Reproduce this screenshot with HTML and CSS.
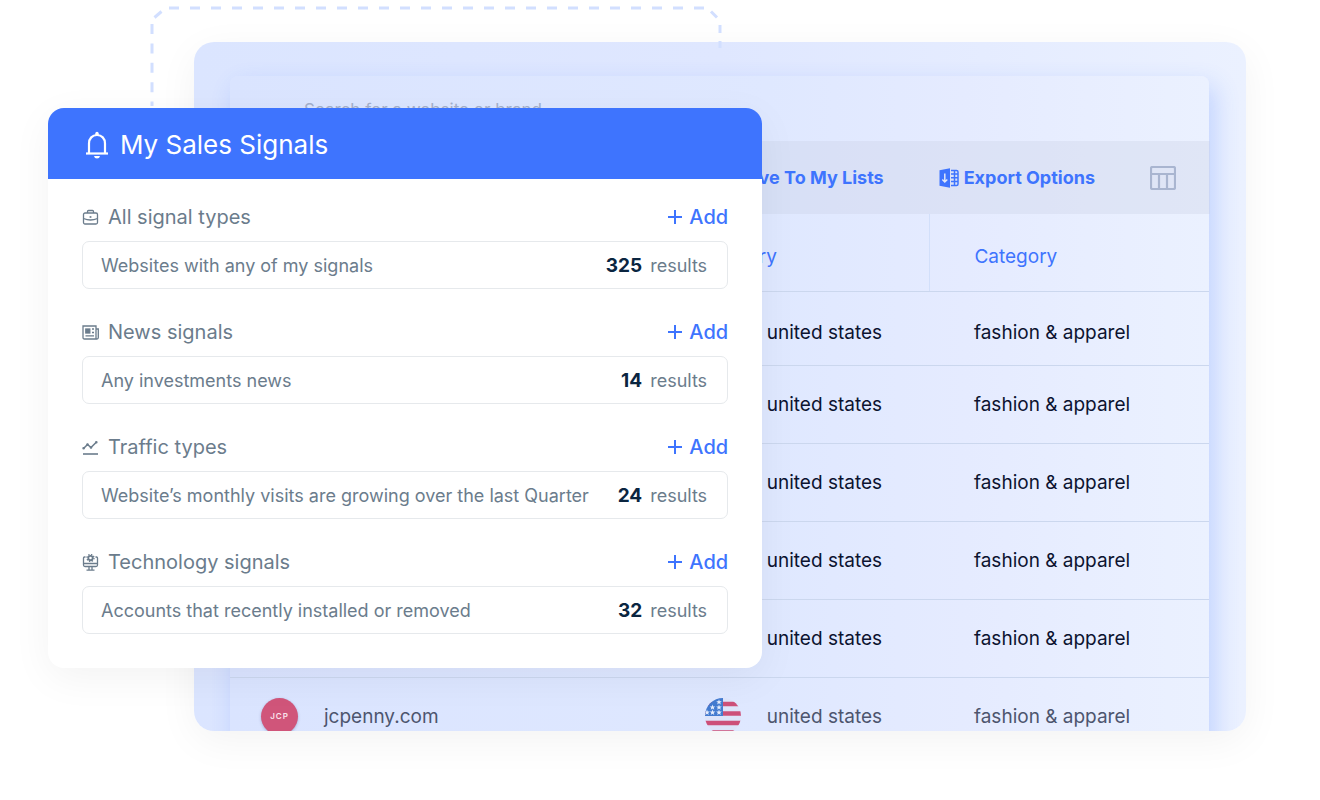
FILE: index.html
```html
<!DOCTYPE html>
<html lang="en">
<head>
  <meta charset="UTF-8" />
  <meta name="viewport" content="width=device-width, initial-scale=1.0" />
  <title>My Sales Signals</title>
  <link rel="stylesheet" href="styles.css">
</head>
<body>

<main class="scene">

  <svg class="connector" width="572" height="110" viewBox="0 0 572 110" aria-hidden="true">
    <path d="M2 24V106" stroke-dasharray="10 9.4" />
    <path d="M4.500 17.500L11.500 11.500" />
    <path d="M19 8H554" stroke-dasharray="10 11" />
    <path d="M561 11.500L567 17.500" />
    <path d="M570 25V33M570 41V48" />
  </svg>

  <section class="panel">
    <div class="sheet">
      <div class="search">
        <input type="text" class="search-input" placeholder="Search for a website or brand" aria-label="Search for a website or brand">
      </div>

      <div class="toolbar">
        <button type="button" class="tool">Save To My Lists</button>
        <button type="button" class="tool">
          <svg width="20" height="20" viewBox="0 0 20 20" aria-hidden="true">
            <path d="M0.500 2.200L11 0.300V19.700L0.500 17.800Z" fill="#3e74fe" />
            <path d="M5.800 5.500V13.500M3.300 11.500L5.800 14L8.300 11.500" fill="none" stroke="#e0e6f8" stroke-width="1.500" />
            <path d="M12 2.500H17.500Q19 2.500 19 4V16Q19 17.500 17.500 17.500H12M12 6H19M12 9.800H19M12 13.600H19M15.500 2.500V17.500" fill="none" stroke="#3e74fe" stroke-width="1.500" />
          </svg>
          Export Options
        </button>
        <button type="button" class="tool" aria-label="Columns">
          <svg width="26" height="24" viewBox="0 0 26 24" fill="none" stroke="#a9b5d0" stroke-width="2.200" aria-hidden="true">
            <rect x="1" y="1" width="24" height="22" rx="1.500" />
            <path d="M1 8H25M9 8V23M17 8V23" />
          </svg>
        </button>
      </div>

      <table class="results-table">
        <thead>
          <tr>
            <th class="col-domain"></th>
            <th class="col-country">Country</th>
            <th class="col-category">Category</th>
          </tr>
        </thead>
        <tbody>
          <tr><td></td><td><span class="country">united states</span></td><td>fashion &amp; apparel</td></tr>
          <tr><td></td><td><span class="country">united states</span></td><td>fashion &amp; apparel</td></tr>
          <tr><td></td><td><span class="country">united states</span></td><td>fashion &amp; apparel</td></tr>
          <tr><td></td><td><span class="country">united states</span></td><td>fashion &amp; apparel</td></tr>
          <tr><td></td><td><span class="country">united states</span></td><td>fashion &amp; apparel</td></tr>
          <tr class="faded">
            <td>
              <div class="domain"><span class="logo">JCP</span>jcpenny.com</div>
            </td>
            <td>
              <div class="flag-cell">
                <svg width="36" height="36" viewBox="0 0 36 36" aria-hidden="true">
                  <clipPath id="round"><circle cx="18" cy="18" r="18" /></clipPath>
                  <g clip-path="url(#round)">
                    <rect width="36" height="36" fill="#dde4fa" />
                    <path d="M0 6H36M0 15.500H36M0 25H36M0 34.500H36" stroke="#cd5079" stroke-width="4.700" />
                    <rect width="18" height="18" fill="#437bd0" />
                    <g fill="#e6edfc">
                      <path id="star" d="M14 1.200L14.700 3.200H16.800L15.200 4.500L15.800 6.500L14 5.300L12.200 6.500L12.800 4.500L11.200 3.200H13.300Z" />
                      <use href="#star" y="5.300" />
                      <use href="#star" y="10.400" />
                      <use href="#star" x="-6.500" y="5.300" />
                      <use href="#star" x="-6.500" y="10.400" />
                      <use href="#star" x="-12" y="10.400" />
                    </g>
                  </g>
                </svg>
                united states
              </div>
            </td>
            <td>fashion &amp; apparel</td>
          </tr>
        </tbody>
      </table>
    </div>
  </section>

  <section class="signals">
    <header class="signals-header">
      <svg width="24" height="28" viewBox="0 0 24 28" fill="none" stroke="#fff" stroke-width="2.200" aria-hidden="true">
        <path d="M1 22.500H23" />
        <path d="M4 22V12.500C4 7.500 7.300 4 12 4S20 7.500 20 12.500V22" />
        <path d="M10.300 4V2.500Q10.300 0.800 12 0.800T13.700 2.500V4Z" fill="#fff" stroke="none" />
        <path d="M9 25H15Q14.500 27.500 12 27.500T9 25Z" fill="#fff" stroke="none" />
      </svg>
      <h1 class="signals-title">My Sales Signals</h1>
    </header>

    <div class="signals-body">
      <div class="group">
        <div class="group-head">
          <svg class="icon" viewBox="0 0 17 17" aria-hidden="true">
            <rect x="1.500" y="4" width="14" height="11" rx="1.500" />
            <path d="M5.500 4V2.500Q5.500 1.500 6.500 1.500H10.500Q11.500 1.500 11.500 2.500V4M1.500 9.500Q8.500 12.500 15.500 9.500" />
            <circle cx="8.500" cy="8" r="0.400" />
          </svg>
          <h2 class="group-title">All signal types</h2>
          <button type="button" class="add"><svg class="plus" viewBox="0 0 14 14" aria-hidden="true"><path d="M7 0V14M0 7H14" /></svg>Add</button>
        </div>
        <a href="#" class="signal">Websites with any of my signals <span class="count"><b>325</b>results</span></a>
      </div>

      <div class="group">
        <div class="group-head">
          <svg class="icon" viewBox="0 0 17 17" aria-hidden="true">
            <path d="M1 2H14V15H2.500Q1 15 1 13.500ZM14 5H16.300V13.500Q16.300 15 15 15H13" />
            <rect x="3.800" y="5" width="4" height="4" fill="#6b7c8c" />
            <path d="M10 5H12M10 8.500H12M3.500 11.800H12" />
          </svg>
          <h2 class="group-title">News signals</h2>
          <button type="button" class="add"><svg class="plus" viewBox="0 0 14 14" aria-hidden="true"><path d="M7 0V14M0 7H14" /></svg>Add</button>
        </div>
        <a href="#" class="signal">Any investments news <span class="count"><b>14</b>results</span></a>
      </div>

      <div class="group">
        <div class="group-head">
          <svg class="icon" viewBox="0 0 17 17" aria-hidden="true">
            <path d="M1 15H16" stroke-width="1.600" />
            <path d="M1.500 9.500L5.500 5.500L9 8.500L14 3.500" stroke-width="1.600" />
            <path d="M5.500 5.500h0.010M9 8.500h0.010M14.300 3.300h0.010M1.600 9.300h0.010" stroke-width="2.600" stroke-linecap="round" />
          </svg>
          <h2 class="group-title">Traffic types</h2>
          <button type="button" class="add"><svg class="plus" viewBox="0 0 14 14" aria-hidden="true"><path d="M7 0V14M0 7H14" /></svg>Add</button>
        </div>
        <a href="#" class="signal">Website’s monthly visits are growing over the last Quarter <span class="count"><b>24</b>results</span></a>
      </div>

      <div class="group">
        <div class="group-head">
          <svg class="icon" viewBox="0 0 17 17" aria-hidden="true">
            <path d="M3.500 3H2.500Q1.500 3 1.500 4V11Q1.500 12.500 3 12.500H14Q15.500 12.500 15.500 11V4Q15.500 3 14.500 3H13.500M1.500 9.500H15.500M7 12.500V16M10 12.500V16M4.500 16.200H12.500" />
            <circle cx="8.500" cy="4" r="2.200" stroke-width="1.800" />
            <circle cx="8.500" cy="4" r="3.500" stroke-width="1.300" stroke-dasharray="1.400 1.350" />
          </svg>
          <h2 class="group-title">Technology signals</h2>
          <button type="button" class="add"><svg class="plus" viewBox="0 0 14 14" aria-hidden="true"><path d="M7 0V14M0 7H14" /></svg>Add</button>
        </div>
        <a href="#" class="signal">Accounts that recently installed or removed <span class="count"><b>32</b>results</span></a>
      </div>
    </div>
  </section>

</main>

</body>
</html>
```

FILE: styles.css
```css
:root {
  --primary-color: #3e74fe;
  --muted-color: #6b7c8c;
  --line-color: #cbd7ee;
}

* {
  box-sizing: border-box;
}

body {
  font-family: Inter, "Liberation Sans", sans-serif;
  background-color: #fff;
  margin: 0;
}

button {
  font-family: inherit;
  background: none;
  border: 0;
  padding: 0;
  color: var(--primary-color);
  cursor: pointer;
}

.scene {
  position: relative;
  padding: 42px 74px 70px 194px;
}

.connector {
  position: absolute;
  top: 0;
  left: 150px;
  fill: none;
  stroke: #d2dfff;
  stroke-width: 3;
}

/* table panel */
.panel {
  padding: 34px 37px 0 36px;
  border-radius: 20px;
  overflow: hidden;
  background: linear-gradient(90deg, #dbe5ff, #dfe7ff 50%, #ebf1ff);
  box-shadow: 0 10px 40px rgba(0, 0, 0, 0.05);
}

/* the last row runs past the bottom edge of the panel */
.sheet {
  margin-bottom: -25px;
  border-radius: 8px 8px 0 0;
  background: linear-gradient(90deg, #dae4ff, #dfe8ff 55%, #e5ebff 75%, #ebf1ff);
  box-shadow: 6px 10px 24px rgba(62, 116, 254, 0.24);
}

.search {
  height: 65px;
  padding: 2px 74px 0;
  display: flex;
  align-items: center;
}

.search-input {
  width: 100%;
  padding: 0;
  border: 0;
  background: none;
  font-family: inherit;
  font-size: 17px;
}

.search-input::placeholder {
  color: #a3b0cc;
}

.toolbar {
  height: 73px;
  padding: 0 34px;
  margin-right: -1px;
  display: flex;
  justify-content: flex-end;
  align-items: center;
  gap: 55px;
  background-color: rgba(200, 206, 226, 0.3);
}

.tool {
  display: flex;
  align-items: center;
  gap: 5px;
  font-size: 18px;
  font-weight: 700;
}

.results-table {
  width: 100%;
  table-layout: fixed;
  border-collapse: collapse;
  font-size: 19px;
  color: #0c1330;
}

.results-table th,
.results-table td {
  height: 78px;
  padding: 0 0 0 44px;
  border-bottom: 1px solid var(--line-color);
  text-align: left;
  font-weight: 400;
}

.results-table th {
  height: 77px;
  padding-top: 8px;
  color: var(--primary-color);
}

.results-table td:first-child {
  padding-left: 31px;
}

.results-table tbody tr:first-child td {
  height: 74px;
  padding-top: 8px;
}

.col-domain {
  width: 44%;
}

.col-country {
  width: 27.5%;
  border-right: 1px solid #d2dffa;
}

.country {
  padding-left: 62px;
}

.domain,
.flag-cell {
  display: flex;
  align-items: center;
  gap: 26px;
}

.faded {
  color: #4d556e;
}

.logo {
  width: 37px;
  height: 37px;
  border-radius: 50%;
  display: flex;
  align-items: center;
  justify-content: center;
  background-color: #d0557a;
  box-shadow: 0 1px 3px rgba(40, 60, 120, 0.3);
  color: #fbe3ec;
  font-size: 8px;
  font-weight: 600;
  letter-spacing: 1px;
}

/* signals card */
.signals {
  position: absolute;
  top: 108px;
  left: 48px;
  width: 54.1%;
  border-radius: 16px;
  background-color: #fff;
  box-shadow: 0 10px 40px rgba(0, 0, 0, 0.05);
}

.signals-header {
  height: 71px;
  padding: 2px 37px 0;
  display: flex;
  align-items: center;
  gap: 11px;
  border-radius: 16px 16px 0 0;
  background-color: var(--primary-color);
  color: #fff;
}

.signals-title {
  margin: 0;
  font-size: 26px;
  font-weight: 400;
}

.signals-body {
  padding: 22px 34px 34px;
  display: flex;
  flex-direction: column;
  gap: 27px;
}

.group-head {
  height: 32px;
  margin-bottom: 8px;
  display: flex;
  align-items: center;
  color: var(--muted-color);
}

.icon {
  width: 17px;
  height: 17px;
  margin-right: 9px;
  fill: none;
  stroke: var(--muted-color);
  stroke-width: 1.3;
}

.group-title {
  margin: 0;
  font-size: 20px;
  font-weight: 400;
}

.add {
  margin-left: auto;
  display: flex;
  align-items: center;
  gap: 7px;
  font-size: 20px;
  font-weight: 500;
}

.plus {
  width: 14px;
  height: 14px;
  stroke: var(--primary-color);
  stroke-width: 2;
}

.signal {
  height: 48px;
  padding: 0 20px 0 18px;
  display: flex;
  align-items: center;
  justify-content: space-between;
  border: 1px solid #e6e9ec;
  border-radius: 7px;
  color: var(--muted-color);
  font-size: 18px;
  text-decoration: none;
  white-space: nowrap;
}

.count {
  display: flex;
  align-items: center;
  gap: 8px;
}

.count b {
  color: #0a2540;
  font-size: 19px;
}
```
